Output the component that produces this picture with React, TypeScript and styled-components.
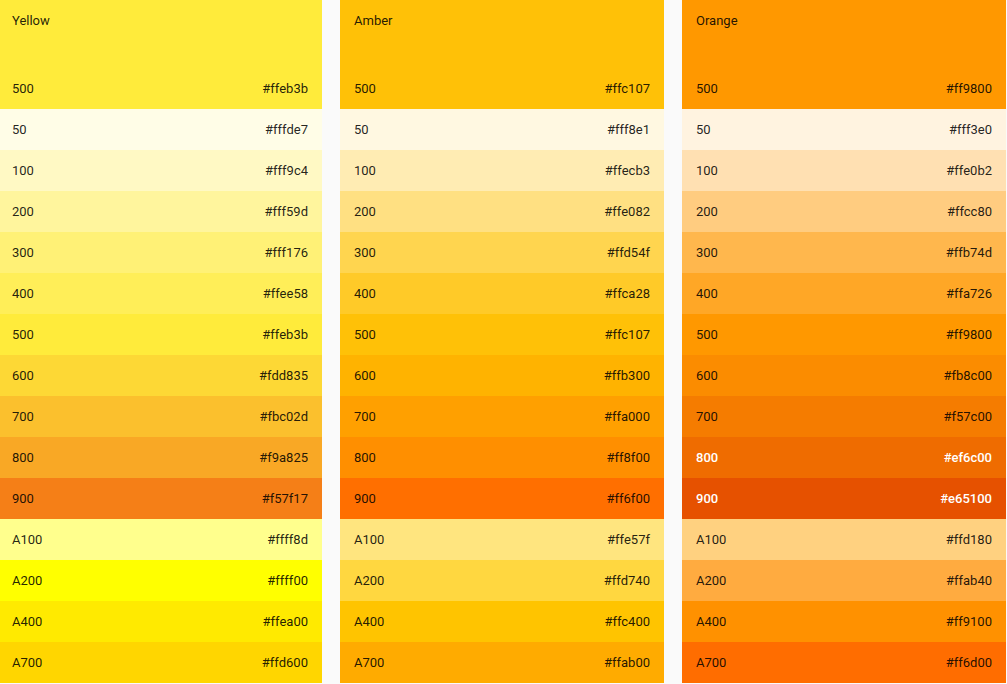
import styled, { createGlobalStyle } from 'styled-components';

type Shade = { name: string; hex: string; light?: boolean };
type Palette = { title: string; main: string; shades: Shade[] };

const palettes: Palette[] = [
  {
    title: 'Yellow',
    main: '#ffeb3b',
    shades: [
      { name: '50', hex: '#fffde7' },
      { name: '100', hex: '#fff9c4' },
      { name: '200', hex: '#fff59d' },
      { name: '300', hex: '#fff176' },
      { name: '400', hex: '#ffee58' },
      { name: '500', hex: '#ffeb3b' },
      { name: '600', hex: '#fdd835' },
      { name: '700', hex: '#fbc02d' },
      { name: '800', hex: '#f9a825' },
      { name: '900', hex: '#f57f17' },
      { name: 'A100', hex: '#ffff8d' },
      { name: 'A200', hex: '#ffff00' },
      { name: 'A400', hex: '#ffea00' },
      { name: 'A700', hex: '#ffd600' },
    ],
  },
  {
    title: 'Amber',
    main: '#ffc107',
    shades: [
      { name: '50', hex: '#fff8e1' },
      { name: '100', hex: '#ffecb3' },
      { name: '200', hex: '#ffe082' },
      { name: '300', hex: '#ffd54f' },
      { name: '400', hex: '#ffca28' },
      { name: '500', hex: '#ffc107' },
      { name: '600', hex: '#ffb300' },
      { name: '700', hex: '#ffa000' },
      { name: '800', hex: '#ff8f00' },
      { name: '900', hex: '#ff6f00' },
      { name: 'A100', hex: '#ffe57f' },
      { name: 'A200', hex: '#ffd740' },
      { name: 'A400', hex: '#ffc400' },
      { name: 'A700', hex: '#ffab00' },
    ],
  },
  {
    title: 'Orange',
    main: '#ff9800',
    shades: [
      { name: '50', hex: '#fff3e0' },
      { name: '100', hex: '#ffe0b2' },
      { name: '200', hex: '#ffcc80' },
      { name: '300', hex: '#ffb74d' },
      { name: '400', hex: '#ffa726' },
      { name: '500', hex: '#ff9800' },
      { name: '600', hex: '#fb8c00' },
      { name: '700', hex: '#f57c00' },
      { name: '800', hex: '#ef6c00', light: true },
      { name: '900', hex: '#e65100', light: true },
      { name: 'A100', hex: '#ffd180' },
      { name: 'A200', hex: '#ffab40' },
      { name: 'A400', hex: '#ff9100' },
      { name: 'A700', hex: '#ff6d00' },
    ],
  },
];

export default function App() {
  return (
    <>
      <GlobalStyle />
      <Grid>
        {palettes.map((p) => (
          <Column key={p.title}>
            <Header $bg={p.main}>
              <Title>{p.title}</Title>
              <Row $bg={p.main}>
                <span>500</span>
                <span>{p.main}</span>
              </Row>
            </Header>
            {p.shades.map((s) => (
              <Row key={s.name} $bg={s.hex} $light={s.light}>
                <span>{s.name}</span>
                <span>{s.hex}</span>
              </Row>
            ))}
          </Column>
        ))}
      </Grid>
    </>
  );
}

const GlobalStyle = createGlobalStyle`
  html, body {
    margin: 0;
    padding: 0;
    background: #fafafa;
    font-family: Roboto, "Liberation Sans", Arial, sans-serif;
    overflow: hidden;
  }
`;

const Grid = styled.div`
  display: grid;
  grid-template-columns: repeat(3, 324px);
  column-gap: 18px;
  margin-left: -2px;
`;

const Column = styled.section`
  display: flex;
  flex-direction: column;
`;

const Header = styled.header<{ $bg: string }>`
  display: flex;
  flex-direction: column;
  background: ${({ $bg }) => $bg};
`;

const Title = styled.h2`
  margin: 0;
  height: 68px;
  padding: 13px 14px 0;
  box-sizing: border-box;
  font-size: 13px;
  font-weight: 400;
  line-height: 15px;
  color: rgba(0, 0, 0, 0.87);
`;

const Row = styled.div<{ $bg: string; $light?: boolean }>`
  display: flex;
  justify-content: space-between;
  align-items: center;
  height: 41px;
  padding: 0 14px;
  box-sizing: border-box;
  background: ${({ $bg }) => $bg};
  font-size: 13px;
  font-weight: ${({ $light }) => ($light ? 500 : 400)};
  color: ${({ $light }) => ($light ? '#ffffff' : 'rgba(0, 0, 0, 0.87)')};
`;
